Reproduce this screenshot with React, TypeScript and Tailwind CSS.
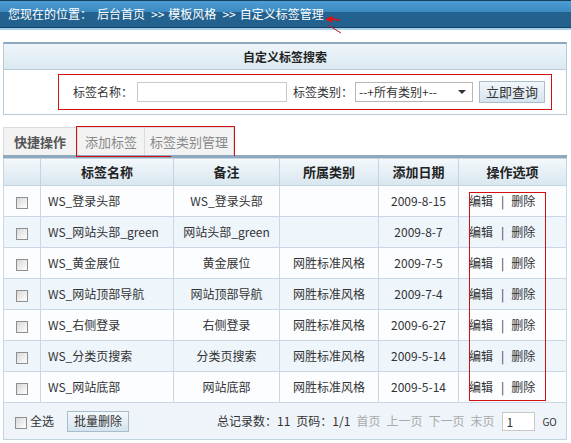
import React from 'react';

const rows = [
  { name: 'WS_登录头部', note: 'WS_登录头部', cat: '', date: '2009-8-15' },
  { name: 'WS_网站头部_green', note: '网站头部_green', cat: '', date: '2009-8-7' },
  { name: 'WS_黄金展位', note: '黄金展位', cat: '网胜标准风格', date: '2009-7-5' },
  { name: 'WS_网站顶部导航', note: '网站顶部导航', cat: '网胜标准风格', date: '2009-7-4' },
  { name: 'WS_右侧登录', note: '右侧登录', cat: '网胜标准风格', date: '2009-6-27' },
  { name: 'WS_分类页搜索', note: '分类页搜索', cat: '网胜标准风格', date: '2009-5-14' },
  { name: 'WS_网站底部', note: '网站底部', cat: '网胜标准风格', date: '2009-5-14' },
];

const Box = () => (
  <span className="inline-block h-[12px] w-[12px] border border-[#8f8f8f] bg-[linear-gradient(135deg,#d8d8d8,#ffffff)] align-middle" />
);

export default function App() {
  return (
    <div className="relative w-[571px] h-[443px] overflow-hidden bg-white text-[12px] text-[#222] [font-family:'Noto_Sans_CJK_SC','Liberation_Sans',sans-serif]">
      {/* top bar */}
      <div className="h-[28px] border-t border-b border-[#173f5e] bg-[linear-gradient(to_bottom,#4d9dd4_0%,#3b89c1_42%,#23628f_44%,#23628f_100%)] flex items-center pl-[8px] text-white text-[12px] leading-none">
        <span>您现在的位置：</span>
        <span className="ml-[5px]">后台首页</span>
        <span className="ml-[6px]">&gt;&gt;</span>
        <span className="ml-[4px]">模板风格</span>
        <span className="ml-[6px]">&gt;&gt;</span>
        <span className="ml-[4px]">自定义标签管理</span>
      </div>
      <div className="h-[2px] bg-[#a9d0ea]" />
      <svg className="absolute left-[322px] top-[12px]" width="24" height="24" viewBox="0 0 24 24">
        <polygon points="3,7 11,4 10,11" fill="#e01010" />
        <line x1="9" y1="7" x2="18" y2="8" stroke="#e01010" strokeWidth="1.5" />
        <line x1="6" y1="13" x2="19" y2="21" stroke="#c81818" strokeWidth="1" />
      </svg>

      {/* search panel */}
      <div className="mx-[3px] mr-[4px] mt-[12px] border-x border-b border-[#b9cbd9] border-t-2 border-t-[#8ea9bf]">
        <div className="h-[26px] flex items-center justify-center font-bold text-[12px] bg-[linear-gradient(to_bottom,#eef5fa,#dce9f2)] border-b border-[#b9cbd9]">
          自定义标签搜索
        </div>
        <div className="h-[44px] flex items-center pl-[54px]">
          <div className="h-[36px] w-[494px] border border-[#d21010] flex items-center pl-[14px] text-[#333]">
            <span>标签名称：</span>
            <span className="ml-[4px] h-[20px] w-[150px] border border-[#c9c9c9] bg-white" />
            <span className="ml-[6px]">标签类别：</span>
            <span className="ml-[2px] h-[20px] w-[118px] border border-[#b7b7b7] bg-white flex items-center pl-[3px] text-[12px]">
              <span>--+所有类别+--</span>
              <span className="ml-auto mr-[6px] border-x-[4px] border-t-[4px] border-x-transparent border-t-[#333]" />
            </span>
            <span className="ml-[6px] h-[22px] w-[66px] border border-[#a9bccc] bg-[linear-gradient(to_bottom,#f2f7fb,#d4e3ee)] flex items-center justify-center text-[13px]">
              立即查询
            </span>
          </div>
        </div>
      </div>

      {/* tabs */}
      <div className="relative mx-[3px] mr-[4px] mt-[12px] flex h-[28px]">
        <div className="w-[74px] border-l border-t border-[#dcdcdc] bg-[#f3f3f3] flex items-center pl-[10px] font-bold text-[#555] text-[13px]">
          快捷操作
        </div>
        <div className="w-[67px] border-t border-l border-[#dcdcdc] bg-[#f3f3f3] flex items-center justify-center text-[#888] text-[13px]">
          添加标签
        </div>
        <div className="w-[90px] border-t border-x border-[#dcdcdc] bg-[#f3f3f3] flex items-center justify-center text-[#888] text-[13px]">
          标签类别管理
        </div>
        <div className="absolute left-[73px] top-[-1px] w-[159px] h-[30px] border border-[#d21010] border-b-0" />
        <div className="absolute left-[73px] top-[29px] w-[95px] h-0 border-t border-[#d21010]" />
      </div>

      {/* table */}
      <div className="mx-[3px] mr-[4px] border-t-[3px] border-[#8ea9bf]">
        <table className="w-full border-collapse table-fixed border-x border-[#c3d3df]">
          <colgroup>
            <col className="w-[37px]" />
            <col className="w-[133px]" />
            <col className="w-[106px]" />
            <col className="w-[99px]" />
            <col className="w-[80px]" />
            <col />
          </colgroup>
          <thead>
            <tr className="h-[27px] bg-[linear-gradient(to_bottom,#f3f8fb,#d8e6ef)] text-[13px] font-bold">
              <th className="border border-[#c3d3df]" />
              <th className="border border-[#c3d3df]">标签名称</th>
              <th className="border border-[#c3d3df]">备注</th>
              <th className="border border-[#c3d3df]">所属类别</th>
              <th className="border border-[#c3d3df]">添加日期</th>
              <th className="border border-[#c3d3df]">操作选项</th>
            </tr>
          </thead>
          <tbody className="text-[12px] text-[#333]">
            {rows.map((r, i) => (
              <tr key={i} className={`h-[31px] ${i % 2 === 0 ? 'bg-[#fbfdff]' : 'bg-[#eef5fb]'}`}>
                <td className="border border-[#c9d8e4] text-center"><Box /></td>
                <td className="border border-[#c9d8e4] pl-[7px] whitespace-nowrap">{r.name}</td>
                <td className="border border-[#c9d8e4] text-center whitespace-nowrap">{r.note}</td>
                <td className="border border-[#c9d8e4] text-center whitespace-nowrap">{r.cat}</td>
                <td className="border border-[#c9d8e4] text-center">{r.date}</td>
                <td className="border border-[#c9d8e4] pl-[10px] whitespace-nowrap">
                  <span>编辑</span>
                  <span className="ml-[8px]">|</span>
                  <span className="ml-[7px]">删除</span>
                </td>
              </tr>
            ))}
          </tbody>
        </table>
        <div className="h-[37px] flex items-center border border-t-0 border-[#c3d3df] bg-[#eef4f9] text-[#333] text-[12px]">
          <span className="ml-[11px]"><Box /></span>
          <span className="ml-[3px]">全选</span>
          <span className="ml-[13px] h-[21px] w-[62px] border border-[#a9bccc] bg-[linear-gradient(to_bottom,#f5f9fc,#d4e3ee)] flex items-center justify-center">
            批量删除
          </span>
          <span className="ml-[88px]">总记录数：11</span>
          <span className="ml-[6px]">页码：1/1</span>
          <span className="ml-[6px] text-[#aaa]">首页</span>
          <span className="ml-[6px] text-[#aaa]">上一页</span>
          <span className="ml-[6px] text-[#aaa]">下一页</span>
          <span className="ml-[6px] text-[#aaa]">末页</span>
          <span className="ml-[8px] h-[19px] w-[33px] border border-[#c9c9c9] bg-white pl-[3px] leading-[17px]">1</span>
          <span className="ml-[7px] text-[10px]">GO</span>
        </div>
      </div>

      {/* red highlight over the action column */}
      <div className="absolute left-[469px] top-[192px] w-[77px] h-[209px] border border-[#d21010] pointer-events-none" />
    </div>
  );
}
